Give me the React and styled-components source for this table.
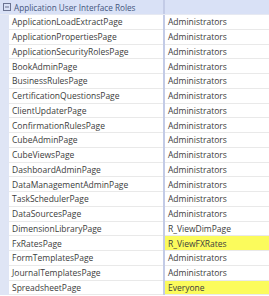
import React from 'react';
import styled, { createGlobalStyle } from 'styled-components';

const GlobalStyle = createGlobalStyle`
  html, body {
    margin: 0;
    padding: 0;
    background: #ffffff;
  }
  body {
    font-family: "Open Sans", "Liberation Sans", sans-serif;
  }
`;

const Grid = styled.div`
  width: 269px;
  height: 296px;
  overflow: hidden;
  display: flex;
  flex-direction: column;
  background: #ffffff;
`;

const Header = styled.div`
  display: grid;
  grid-template-columns: 163px 2px 1fr;
  height: 14px;
  border-bottom: 1px solid #e6e9f2;
  background: #d9e1f6;
`;

const HeaderTitle = styled.div`
  display: flex;
  align-items: center;
  gap: 3px;
  padding-left: 3px;
  font-size: 8.2px;
  color: #44557d;
  white-space: nowrap;
`;

const Divider = styled.div`
  background: #c3cbe6;
`;

const Row = styled.div`
  display: grid;
  grid-template-columns: 9px 154px 2px 1fr;
  height: 14.75px;
`;

const Gutter = styled.div`
  background: #dfe5f5;
`;

const Cell = styled.div`
  display: flex;
  align-items: center;
  padding-left: 3px;
  font-size: 8.5px;
  color: #3c3c3c;
  white-space: nowrap;
  overflow: hidden;
  border-bottom: 1px solid #e9e9e9;
  background: ${(p) => (p.$highlight ? '#fbfb5c' : '#ffffff')};
`;

const CollapseIcon = () => (
  <svg width="8" height="8" viewBox="0 0 8 8">
    <rect x="0.5" y="0.5" width="7" height="7" fill="none" stroke="#6a7290" />
    <line x1="2" y1="4" x2="6" y2="4" stroke="#6a7290" />
  </svg>
);

const rows = [
  ['ApplicationLoadExtractPage', 'Administrators'],
  ['ApplicationPropertiesPage', 'Administrators'],
  ['ApplicationSecurityRolesPage', 'Administrators'],
  ['BookAdminPage', 'Administrators'],
  ['BusinessRulesPage', 'Administrators'],
  ['CertificationQuestionsPage', 'Administrators'],
  ['ClientUpdaterPage', 'Administrators'],
  ['ConfirmationRulesPage', 'Administrators'],
  ['CubeAdminPage', 'Administrators'],
  ['CubeViewsPage', 'Administrators'],
  ['DashboardAdminPage', 'Administrators'],
  ['DataManagementAdminPage', 'Administrators'],
  ['TaskSchedulerPage', 'Administrators'],
  ['DataSourcesPage', 'Administrators'],
  ['DimensionLibraryPage', 'R_ViewDimPage'],
  ['FxRatesPage', 'R_ViewFXRates', true],
  ['FormTemplatesPage', 'Administrators'],
  ['JournalTemplatesPage', 'Administrators'],
  ['SpreadsheetPage', 'Everyone', true],
];

export default function App() {
  return (
    <>
      <GlobalStyle />
      <Grid>
        <Header>
          <HeaderTitle>
            <CollapseIcon />
            Application User Interface Roles
          </HeaderTitle>
          <Divider />
          <div />
        </Header>
        {rows.map(([name, role, highlight]) => (
          <Row key={name}>
            <Gutter />
            <Cell>{name}</Cell>
            <Divider />
            <Cell $highlight={highlight}>{role}</Cell>
          </Row>
        ))}
      </Grid>
    </>
  );
}
